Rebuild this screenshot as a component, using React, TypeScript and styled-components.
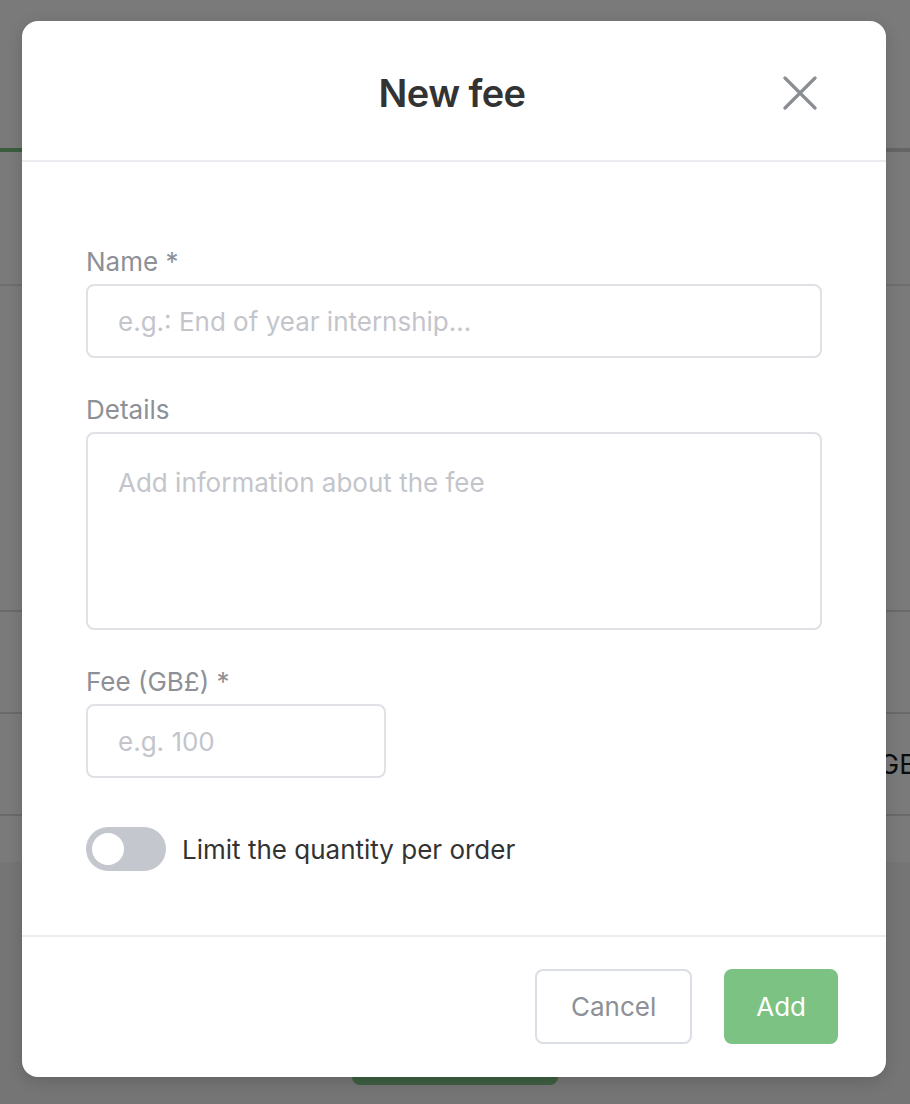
import React from "react";
import styled, { createGlobalStyle } from "styled-components";

const GlobalStyle = createGlobalStyle`
  html, body {
    margin: 0;
    padding: 0;
  }
  body {
    font-family: Inter, "Noto Sans", Arial, sans-serif;
    -webkit-font-smoothing: antialiased;
  }
  * {
    box-sizing: border-box;
  }
`;

/* page behind the dialog */
const Page = styled.div`
  position: relative;
  width: 910px;
  height: 1104px;
  overflow: hidden;
  background: #ffffff;
`;

const Tabs = styled.div`
  height: 152px;
  display: flex;
  align-items: flex-end;
  border-bottom: 4px solid #d4d4d4;
`;

const ActiveTab = styled.div`
  width: 120px;
  height: 4px;
  margin-bottom: -4px;
  background: #7bc283;
`;

const Toolbar = styled.div`
  height: 134px;
  border-bottom: 2px solid #e6e6e6;
`;

const Table = styled.div`
  margin-top: 324px;
  display: flex;
  flex-direction: column;
`;

const TableRow = styled.div`
  width: 100%;
  height: 102px;
  border-top: 2px solid #dcdcdc;
  display: flex;
  align-items: center;
  padding-left: 879px;
  font-size: 27px;
  color: #1a1a1a;
  overflow: hidden;
  white-space: nowrap;
`;

const PageFooter = styled.div`
  position: absolute;
  left: 0;
  right: 0;
  top: 862px;
  bottom: 0;
  background: #f4f4f4;
  display: flex;
  justify-content: center;
  align-items: flex-end;
  padding-bottom: 19px;
`;

const PageButton = styled.div`
  width: 206px;
  height: 64px;
  border-radius: 8px;
  background: #7fc489;
`;

const Overlay = styled.div`
  position: absolute;
  inset: 0;
  background: rgba(0, 0, 0, 0.52);
  display: flex;
  justify-content: flex-start;
  padding: 21px 0 0 22px;
`;

/* dialog */
const Modal = styled.div`
  width: 864px;
  height: 1056px;
  background: #ffffff;
  border-radius: 16px;
  box-shadow: 0 4px 16px rgba(0, 0, 0, 0.15);
  display: flex;
  flex-direction: column;
  overflow: hidden;
`;

const Header = styled.div`
  position: relative;
  height: 141px;
  flex-shrink: 0;
  display: flex;
  align-items: center;
  justify-content: center;
  padding: 4px 4px 0 0;
  border-bottom: 2px solid #ececf0;
`;

const Title = styled.h2`
  margin: 0;
  font-size: 38px;
  font-weight: 600;
  letter-spacing: -0.6px;
  color: #333333;
`;

const CloseButton = styled.button`
  position: absolute;
  top: 52px;
  right: 66px;
  width: 40px;
  height: 40px;
  padding: 0;
  border: none;
  background: transparent;
  display: flex;
  align-items: center;
  justify-content: center;
  cursor: pointer;
`;

const Body = styled.div`
  flex: 1;
  display: flex;
  flex-direction: column;
  padding: 85px 64px 0 64px;
`;

const Field = styled.div<{ $width?: number }>`
  display: flex;
  flex-direction: column;
  gap: 7px;
  width: ${(p) => (p.$width ? `${p.$width}px` : "100%")};
  margin-bottom: 37px;
`;

const Label = styled.label`
  font-size: 26px;
  line-height: 30px;
  color: #8d9096;
`;

const inputBase = `
  width: 100%;
  border: 2px solid #dfe1e6;
  border-radius: 8px;
  font-family: Inter, "Noto Sans", Arial, sans-serif;
  font-size: 26px;
  color: #333333;
  background: #ffffff;
  outline: none;
  &::placeholder {
    color: #c3c5cb;
  }
`;

const TextInput = styled.input`
  ${inputBase}
  height: 74px;
  padding: 0 30px;
`;

const TextArea = styled.textarea`
  ${inputBase}
  height: 198px;
  padding: 33px 30px;
  resize: none;
`;

const ToggleRow = styled.div`
  display: flex;
  align-items: center;
  gap: 16px;
  margin-top: 12px;
`;

const Switch = styled.button<{ $on: boolean }>`
  width: 80px;
  height: 44px;
  padding: 6px;
  border: none;
  border-radius: 22px;
  background: ${(p) => (p.$on ? "#7bc283" : "#c4c7ce")};
  display: flex;
  justify-content: ${(p) => (p.$on ? "flex-end" : "flex-start")};
  cursor: pointer;
`;

const Knob = styled.span`
  width: 32px;
  height: 32px;
  border-radius: 50%;
  background: #ffffff;
`;

const ToggleLabel = styled.span`
  font-size: 26px;
  color: #333333;
`;

const Footer = styled.div`
  flex-shrink: 0;
  display: flex;
  justify-content: flex-end;
  gap: 32px;
  padding: 32px 48px 33px;
  border-top: 2px solid #ececf0;
`;

const Button = styled.button<{ $primary?: boolean }>`
  height: 75px;
  padding: ${(p) => (p.$primary ? "0 30px" : "0 34px")};
  border-radius: 8px;
  font-family: Inter, "Noto Sans", Arial, sans-serif;
  font-size: 26px;
  cursor: pointer;
  border: 2px solid ${(p) => (p.$primary ? "#7bc283" : "#dcdee5")};
  background: ${(p) => (p.$primary ? "#7bc283" : "#ffffff")};
  color: ${(p) => (p.$primary ? "#ffffff" : "#8d9096")};
`;

const App = (): JSX.Element => {
  const [limit, setLimit] = React.useState(false);

  return (
    <>
      <GlobalStyle />
      <Page>
        <Tabs>
          <ActiveTab />
        </Tabs>
        <Toolbar />
        <Table>
          <TableRow />
          <TableRow>GBP</TableRow>
          <TableRow />
        </Table>
        <PageFooter>
          <PageButton />
        </PageFooter>

        <Overlay>
          <Modal role="dialog" aria-modal="true">
            <Header>
              <Title>New fee</Title>
              <CloseButton aria-label="close">
                <svg width="34" height="34" viewBox="0 0 34 34">
                  <path
                    d="M2 2 L32 32 M32 2 L2 32"
                    stroke="#8a8d92"
                    strokeWidth="3.2"
                    strokeLinecap="round"
                  />
                </svg>
              </CloseButton>
            </Header>

            <Body>
              <Field>
                <Label>Name *</Label>
                <TextInput placeholder="e.g.: End of year internship..." />
              </Field>
              <Field>
                <Label>Details</Label>
                <TextArea placeholder="Add information about the fee" />
              </Field>
              <Field $width={300}>
                <Label>Fee (GB£) *</Label>
                <TextInput placeholder="e.g. 100" />
              </Field>
              <ToggleRow>
                <Switch
                  $on={limit}
                  aria-pressed={limit}
                  onClick={() => setLimit(!limit)}
                >
                  <Knob />
                </Switch>
                <ToggleLabel>Limit the quantity per order</ToggleLabel>
              </ToggleRow>
            </Body>

            <Footer>
              <Button>Cancel</Button>
              <Button $primary>Add</Button>
            </Footer>
          </Modal>
        </Overlay>
      </Page>
    </>
  );
};

export default App;
